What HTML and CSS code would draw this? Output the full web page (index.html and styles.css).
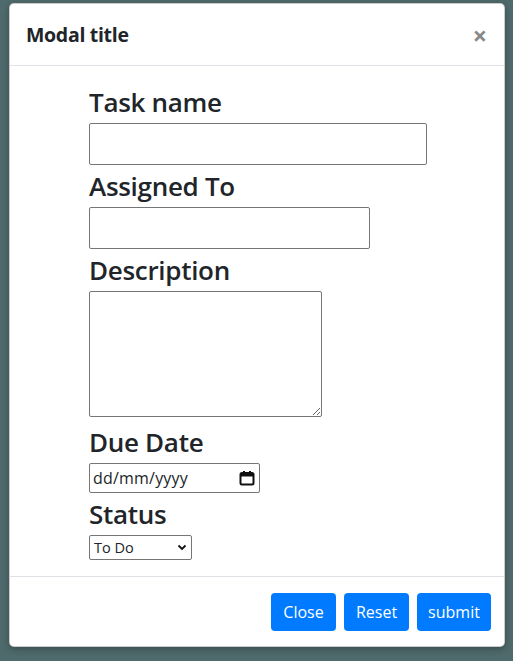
FILE: index.html
```html
<!DOCTYPE html>
<html>
<head>
<meta charset="utf-8">
<link rel="stylesheet" href="styles.css">
</head>
<body>
<div class="modal">
  <div class="modal-header">
    <h5 class="modal-title">Modal title</h5>
    <button class="close" type="button">×</button>
  </div>
  <div class="modal-body">
    <form class="task-form">
      <label class="field-label">Task name</label>
      <input class="text-input w-name" type="text">
      <label class="field-label">Assigned To</label>
      <input class="text-input w-assigned" type="text">
      <label class="field-label">Description</label>
      <textarea class="text-area"></textarea>
      <label class="field-label">Due Date</label>
      <div class="date-input">
        <span class="date-text">dd/mm/yyyy</span>
        <svg class="cal-icon" width="16" height="16" viewBox="0 0 16 16"><rect x="1.5" y="3" width="13" height="11.5" rx="1.5" fill="none" stroke="#111" stroke-width="2"/><rect x="1.5" y="3" width="13" height="3.5" fill="#111"/><rect x="4" y="1" width="2" height="3" fill="#111"/><rect x="10" y="1" width="2" height="3" fill="#111"/></svg>
      </div>
      <label class="field-label">Status</label>
      <div class="select-box">
        <span class="select-text">To Do</span>
        <svg class="chev" width="10" height="7" viewBox="0 0 10 7"><path d="M1.5 1.5 L5 5 L8.5 1.5" fill="none" stroke="#111" stroke-width="1.8"/></svg>
      </div>
    </form>
  </div>
  <div class="modal-footer">
    <button class="btn" type="button">Close</button>
    <button class="btn" type="button">Reset</button>
    <button class="btn btn-submit" type="button">submit</button>
  </div>
</div>
</body>
</html>
```
FILE: styles.css
```css
html, body {
  margin: 0;
  padding: 0;
  background: #4f6a6c;
  height: 661px;
  overflow: hidden;
  font-family: "Open Sans", "Noto Sans", sans-serif;
  color: #212529;
}
body {
  padding: 3px 0 0 9px;
  box-sizing: border-box;
}
.modal {
  width: 496px;
  background: #fff;
  border-radius: 5px;
  border: 1px solid rgba(0,0,0,.2);
  box-sizing: border-box;
  box-shadow: 0 2px 6px rgba(0,0,0,.3);
}
.modal-header {
  display: flex;
  align-items: center;
  justify-content: space-between;
  padding: 16px 17px 15px 16px;
  border-bottom: 1px solid #dee2e6;
}
.modal-title {
  margin: 0;
  font-size: 19.5px;
  font-weight: 700;
  line-height: 30px;
  letter-spacing: -0.3px;
}
.close {
  border: 0;
  background: none;
  font-size: 25px;
  font-weight: 700;
  color: #888;
  padding: 0;
  line-height: 1;
  font-family: "Open Sans", sans-serif;
}
.modal-body {
  padding: 15px 16px 16px 79px;
}
.task-form {
  display: flex;
  flex-direction: column;
  align-items: flex-start;
}
.field-label {
  font-size: 26px;
  line-height: 42px;
  font-weight: 600;
  letter-spacing: -0.3px;
}
.text-input {
  height: 42px;
  box-sizing: border-box;
  border: 1px solid #767676;
  border-radius: 2px;
  margin: 0;
}
.w-name { width: 338px; }
.w-assigned { width: 281px; }
.text-area {
  width: 233px;
  height: 126px;
  box-sizing: border-box;
  border: 1px solid #767676;
  border-radius: 2px;
  margin: 0 0 4px;
  resize: both;
}
.date-input {
  width: 171px;
  height: 30px;
  box-sizing: border-box;
  border: 1px solid #767676;
  border-radius: 2px;
  display: flex;
  align-items: center;
  justify-content: space-between;
  padding: 0 4px 0 3px;
}
.date-text {
  font-size: 16px;
  letter-spacing: 0.2px;
}
.select-box {
  width: 103px;
  height: 25px;
  box-sizing: border-box;
  border: 1px solid #767676;
  border-radius: 2px;
  display: flex;
  align-items: center;
  justify-content: space-between;
  padding: 0 4px 0 4px;
}
.select-text {
  font-size: 14.5px;
}
.modal-footer {
  display: flex;
  justify-content: flex-end;
  gap: 8px;
  padding: 16px 13px 15px;
  border-top: 1px solid #dee2e6;
}
.btn {
  background: #007bff;
  color: #fff;
  border: 0;
  border-radius: 4px;
  height: 38px;
  width: 65px;
  padding: 0;
  font-size: 16px;
  font-family: "Open Sans", sans-serif;
}
.btn-submit {
  width: 74px;
}
```
